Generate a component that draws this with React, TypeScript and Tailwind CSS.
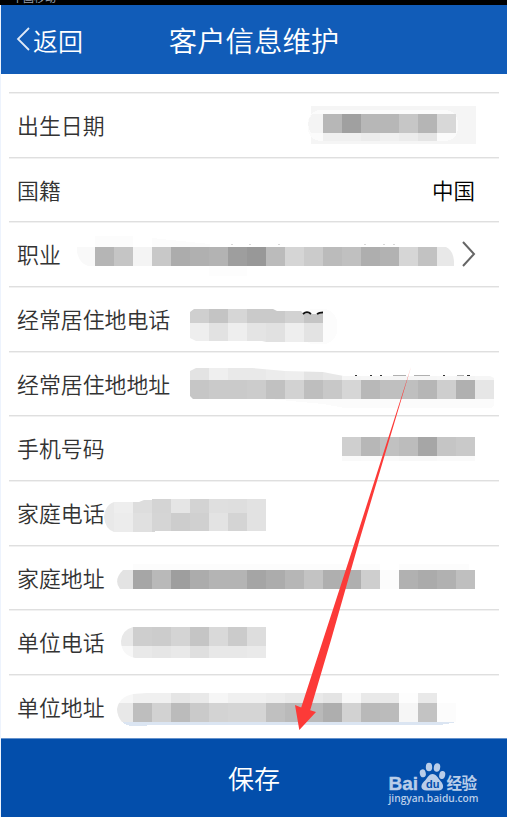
import type {ReactNode} from "react";

type Row = {label: string, value?: string, arrow?: boolean, height: string};

const rows: Row[] = [
    {label: "出生日期", height: "h-[65px]"},
    {label: "国籍", value: "中国", height: "h-[64px]"},
    {label: "职业", arrow: true, height: "h-[65px]"},
    {label: "经常居住地电话", height: "h-[65px]"},
    {label: "经常居住地地址", height: "h-[64px]"},
    {label: "手机号码", height: "h-[65px]"},
    {label: "家庭电话", height: "h-[65px]"},
    {label: "家庭地址", height: "h-[64px]"},
    {label: "单位电话", height: "h-[65px]"},
    {label: "单位地址", height: "h-[64px]"},
];

const CELL = 19;

// colors: two hex digits of gray per cell
function Band({x, y, h, colors}: {x: number, y: number, h: number, colors: string}) {
    return (
        <>
            {colors.split(" ").map((c, i) => (
                <rect key={i} x={x + i * CELL} y={y} width={CELL} height={h} fill={"#" + c + c + c}/>
            ))}
        </>
    );
}

function Mosaic({id, shape, children}: {id: string, shape: string, children: ReactNode}) {
    return (
        <g clipPath={"url(#" + id + ")"}>
            <clipPath id={id}>
                <path d={shape}/>
            </clipPath>
            {children}
        </g>
    );
}

function Marks() {
    return (
        <svg className="pointer-events-none absolute left-0 top-0" width="507" height="817" viewBox="0 0 507 817" shapeRendering="crispEdges">
            <rect x="311" y="106" width="165" height="38" fill="#f5f5f5"/>
            <rect x="308" y="110" width="150" height="31" rx="13" fill="#fbfbfb"/>
            <path d="M323 114H312Q305 123 311 133H323Z" fill="#f4f4f4"/>
            <Band x={323} y={114} h={19} colors="b7 a0 b7 b7 c6 b5 d8"/>
            <Band x={323} y={133} h={8} colors="f0 f0 ec f0 ec e5"/>

            <rect x="95" y="236" width="38" height="11" fill="#fcfcfc"/>
            <path d="M152 238L210 244V247H152Z" fill="#fcfcfc"/>
            <rect x="209" y="266" width="38" height="10" fill="#fdfdfd"/>
            <path d="M231 244.500h2M249 244.500h2M278 244.500h2M364 244.500h2M383 244.500h2M393 244.500h2" stroke="#d8d8d8"/>
            <Mosaic id="job" shape="M77 247H446Q453 250 454 261V266H88Q79 263 77 252Z">
                <Band x={76} y={247} h={19} colors="f9 b5 c5 f4 c8 ac b0 b3 9e 98 bb d5 cb bb c0 ae b2 d6 c2 e8"/>
            </Mosaic>

            <rect x="300" y="309" width="37" height="35" rx="14" fill="#fcfcfc"/>
            <Mosaic id="liveTel" shape="M190 312L194 309H273L277 311H301L304 314H323V342H266L262 341H196L190 338Z">
                <Band x={190} y={309} h={14} colors="cf c4 d6 ca ca d2 c5"/>
                <Band x={190} y={323} h={19} colors="ee e2 ee e4 e1 ee e3"/>
            </Mosaic>
            <path d="M303 314Q307 310.500 311 314M317 314Q319 312.500 323 312.500" stroke="#111111" strokeWidth="1.800" fill="none" shapeRendering="auto"/>

            <path d="M270 399H494V405L491 408H345L323 404Z" fill="#fbfbfb"/>
            <Mosaic id="liveAddr" shape="M190 371L196 368H252L285 371L323 372L333 374L344 376H490L494 378V399H193L190 396Z">
                <Band x={190} y={368} h={12} colors="e3 ef e9 e9 ec ee e4 e8 f5 f6 f6 f6 f6 f7 f4 f6"/>
                <Band x={190} y={380} h={19} colors="c6 ca ca cc c1 d2 be c8 d6 b8 bf bf b6 ce b0 e6"/>
            </Mosaic>
            <path d="M355 375.500h2M370 375.500h2M380 375.500h2M443 375.500h2M467 375.500h3" stroke="#333333"/>
            <path d="M393 375.500h13M414 375.500h16M457 375.500h7" stroke="#b0b0b0"/>

            <Band x={342} y={437} h={19} colors="cf b7 c1 bc a6 c5 c9"/>
            <Band x={342} y={456} h={5} colors="f9 fa fa f8 f8 fa fa"/>

            <Mosaic id="homeTel" shape="M114 502H139L144 500H152V499H266V531H155V532H114Q105 529 104 517Q105 505 114 502Z">
                <Band x={95} y={499} h={14} colors="e9 ee dd d4 e5 d3 df de e2"/>
                <Band x={95} y={513} h={19} colors="e9 ec e0 d5 cd d0 e3 d4 e2"/>
            </Mosaic>

            <rect x="133" y="564" width="247" height="6" fill="#fcfcfc"/>
            <rect x="399" y="564" width="70" height="6" fill="#fcfcfc"/>
            <Mosaic id="homeAddr" shape="M123 570H475V589H120Q113 580 123 570Z">
                <Band x={114} y={570} h={19} colors="e3 a6 b9 9e ac b4 b4 a5 ac b6 c3 af af ce fc b1 ab b1 bf"/>
            </Mosaic>

            <Mosaic id="unitTel" shape="M133 627H266V658H135Q121 655 121 641Q122 630 133 627Z">
                <Band x={114} y={627} h={19} colors="e8 ce cc d4 c5 d9 cb dd"/>
                <Band x={114} y={646} h={12} colors="f7 e9 e6 e9 df e8 e8 ea"/>
            </Mosaic>

            <path d="M122 722H454V723H449V724H443V725H147V726H131Q125 725 122 722Z" fill="#dbe5f2"/>
            <Mosaic id="unitAddr" shape="M133 694L147 693H456V722H122Q117 716 117 709Q119 697 133 694Z">
                <Band x={114} y={693} h={10} colors="f7 f0 f0 e5 e9 f6 f0 f0 ed e9 e9 e4 f8 e9 e9 fd e9 ff"/>
                <Band x={114} y={703} h={19} colors="e8 be d2 bb ca d3 d5 d5 c0 ba b9 ae d2 b9 bb f6 c3 fc"/>
            </Mosaic>

            <path d="M411 367L359.500 540L331 640L310.200 710.200L316 712L299.300 730L295 705L301.200 707.500L323 640L355.500 540Z" fill="#fc3a38" shapeRendering="auto"/>
        </svg>
    );
}

function BaiduLogo() {
    return (
        <svg className="absolute left-[386px] top-[760px]" width="96" height="48" viewBox="386 760 96 48" fill="#b9cde9">
            <text x="388.500" y="789.500" fontFamily="Liberation Sans, Arial, sans-serif" fontWeight="700" fontSize="19" stroke="#b9cde9" strokeWidth="0.400" textLength="29.500" lengthAdjust="spacingAndGlyphs">Bai</text>
            <ellipse cx="422.800" cy="773.300" rx="3" ry="4" transform="rotate(-12 422.800 773.300)"/>
            <ellipse cx="429" cy="767" rx="3.200" ry="4.300"/>
            <ellipse cx="437" cy="767.500" rx="3.200" ry="4.300" transform="rotate(10 437 767.500)"/>
            <ellipse cx="442.200" cy="775" rx="3" ry="4" transform="rotate(12 442.200 775)"/>
            <path d="M432.500 774C436.500 774 438 778 440.500 781C444.500 785 444 790.500 438.500 790.500H426.500C420.500 790.500 420 785 424 781.500C427 779 428.500 774 432.500 774Z"/>
            <text x="426" y="788" fill="#034eab" fontFamily="Liberation Sans, Arial, sans-serif" fontWeight="700" fontSize="11.500" textLength="13.500" lengthAdjust="spacingAndGlyphs">du</text>
            <text x="446.500" y="788.500" fontFamily="Noto Sans CJK SC, sans-serif" fontWeight="700" fontSize="15.500" textLength="30.500">经验</text>
            <text x="388.500" y="802" fontFamily="Open Sans, sans-serif" fontWeight="600" fontSize="10" textLength="90" lengthAdjust="spacingAndGlyphs">jingyan.baidu.com</text>
        </svg>
    );
}

export default function App() {
    return (
        <div className="relative flex h-[817px] w-[507px] flex-col overflow-hidden bg-white font-['Noto_Sans_CJK_SC',sans-serif]">
            <div className="flex h-[5px] shrink-0 items-end overflow-hidden bg-black pb-[2px] pl-3 text-[11px] leading-[12px] text-gray-400">中国移动</div>
            <div className="flex min-h-0 flex-1 flex-col border-l border-[#edf3fd]">
                <header className="grid h-[69px] shrink-0 grid-cols-[1fr_auto_1fr] items-center bg-[#115cb8] text-white">
                    <button className="flex items-center pl-[15px] pt-[1px] text-[25px] font-[350] leading-none">
                        <svg className="mr-[3px] mb-[3px]" width="14" height="24" viewBox="0 0 14 24" fill="none" stroke="#dfe9f7" strokeWidth="1.800">
                            <path d="M13 1L2 12L13 23"/>
                        </svg>
                        返回
                    </button>
                    <h1 className="pt-[1px] text-[28.4px] font-[350] leading-none">客户信息维护</h1>
                    <span/>
                </header>
                <main className="min-h-0 flex-1 pl-2 pr-2 pt-[18px]">
                    {rows.map((row) => (
                        <div key={row.label} className={"flex items-center justify-between border-t border-[#dfdfdf] pl-[8px] pr-[24px] text-[21.9px] leading-none text-[#333333] shadow-[inset_0_1px_0_#f1f1f1] " + row.height}>
                            <span className="font-[350]">{row.label}</span>
                            {row.value && <span className="text-[21.5px] font-[350] text-black">{row.value}</span>}
                            {row.arrow && (
                                <svg className="-mr-[1px] mb-[1px]" width="14" height="26" viewBox="0 0 14 26" fill="none" stroke="#666666" strokeWidth="2">
                                    <path d="M1 1L12 13L1 25"/>
                                </svg>
                            )}
                        </div>
                    ))}
                </main>
                <button className="flex h-[79px] shrink-0 items-center justify-center border-t border-[#6592cc] bg-[#034eab] text-[26px] font-[350] leading-none text-white">保存</button>
            </div>
            <BaiduLogo/>
            <Marks/>
        </div>
    );
}
